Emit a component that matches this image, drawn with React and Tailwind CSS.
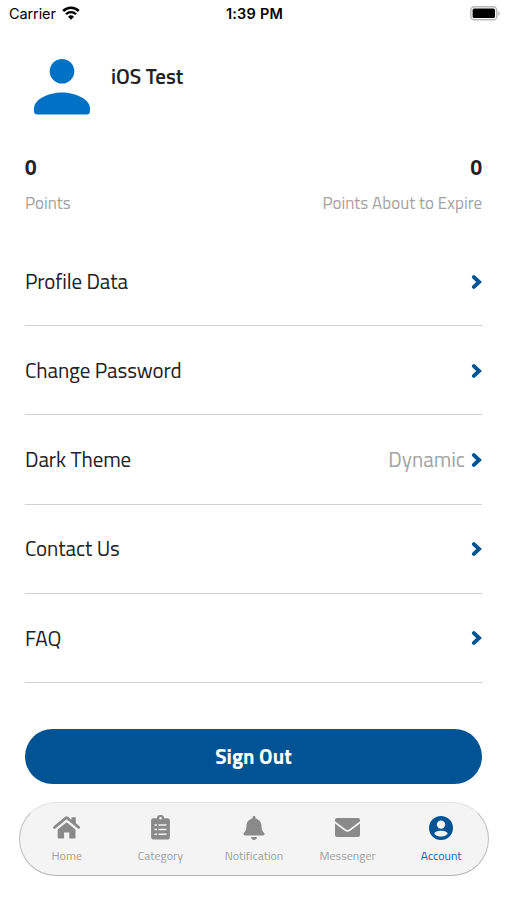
import React from 'react';
import { FaBell } from 'react-icons/fa';

const menuItems = [
  { label: 'Profile Data' },
  { label: 'Change Password' },
  { label: 'Dark Theme', value: 'Dynamic' },
  { label: 'Contact Us' },
  { label: 'FAQ' },
];

const Home = () => (
  <svg width="27" height="23" viewBox="0 0 27 23" fill="currentColor">
    <path d="M18.6 1.2h4.2v8l-4.2-3.6z" />
    <path d="M1.5 11.4L13 1.9q.6-.4 1.200 0l11.500 9.500" fill="none" stroke="currentColor" strokeWidth="2.7" strokeLinecap="round" />
    <path d="M13.6 6.200l8.900 7.400v8q0 1-1 1h-5.200v-6.100h-5.200v6.100H5.700q-1 0-1-1v-8z" />
  </svg>
);

const Clipboard = () => (
  <svg width="19" height="25" viewBox="0 0 19 25">
    <path
      fill="currentColor"
      d="M2.300 3.300h3.600a3.600 3.300 0 0 1 7.200 0h3.600a2.200 2.200 0 0 1 2.200 2.200v16.800a2.200 2.200 0 0 1-2.200 2.200H2.300A2.200 2.200 0 0 1 .1 22.300V5.500a2.200 2.200 0 0 1 2.200-2.200z"
    />
    <circle cx="9.5" cy="3.3" r="1.2" fill="#f4f4f4" />
    <path d="M3.500 9.900h2.400M7.500 9.900h8M3.500 14.600h2.400M7.500 14.600h8M3.500 19.300h2.400M7.500 19.300h8" stroke="#f4f4f4" strokeWidth="1.5" />
  </svg>
);

const Mail = () => (
  <svg width="25" height="19" viewBox="0 0 25 19" fill="currentColor">
    <path d="M2 0h21a2 2 0 0 1 2 2v1.200l-10.600 8.100q-1.900 1.300-3.800 0L0 3.200V2a2 2 0 0 1 2-2z" />
    <path d="M0 5.500l10 7.500q2.500 1.600 5 0l10-7.500V17a2 2 0 0 1-2 2H2a2 2 0 0 1-2-2z" />
  </svg>
);

const Account = () => (
  <svg width="24" height="24" viewBox="0 0 24 24">
    <circle cx="12" cy="12" r="12" fill="currentColor" />
    <circle cx="12" cy="8.6" r="4.2" fill="#f4f4f4" />
    <path d="M12 14.700c3.400 0 6.600 1.300 6.600 2.900 0 1.500-3.200 3-6.600 3s-6.600-1.500-6.600-3c0-1.600 3.200-2.900 6.600-2.900z" fill="#f4f4f4" />
  </svg>
);

const tabs = [
  { label: 'Home', icon: <Home /> },
  { label: 'Category', icon: <Clipboard /> },
  { label: 'Notification', icon: <FaBell size={24} /> },
  { label: 'Messenger', icon: <Mail /> },
  { label: 'Account', icon: <Account />, active: true },
];

const Chevron = () => (
  <svg width="11" height="14" viewBox="0 0 11 14" fill="none">
    <path d="M2.900 2.100L8.100 7l-5.200 4.900" stroke="#005493" strokeWidth="3.9" strokeLinecap="round" />
  </svg>
);

const StatusBar = () => (
  <div className="h-7 grid grid-cols-3 items-center pl-[9px] pr-[7px] font-['Inter',sans-serif] text-black">
    <div className="flex items-center gap-[6px]">
      <span className="text-[14.5px] leading-none tracking-[-0.1px]">Carrier</span>
      <svg className="-mt-[2px]" width="18" height="14" viewBox="0 0 18 14" fill="none" stroke="#000">
        <path d="M1.200 5a11 11 0 0 1 15.600 0" strokeWidth="2.5" />
        <path d="M4 8.200a7 7 0 0 1 10 0" strokeWidth="2.3" />
        <path d="M9 13.800L6 10.800a4.300 4.300 0 0 1 6 0z" fill="#000" stroke="none" />
      </svg>
    </div>
    <span className="text-center text-[14.5px] leading-none font-semibold tracking-[0.2px]">1:39 PM</span>
    <svg className="justify-self-end -mt-[2px]" width="30" height="15" viewBox="0 0 30 15">
      <rect x="0.8" y="0.8" width="26" height="13" rx="3.6" fill="#fff" stroke="#b8b8b8" strokeWidth="1.5" />
      <rect x="2.6" y="2.6" width="22.4" height="9.4" rx="1.6" fill="#000" />
      <path d="M28.300 5v5q1.500-.8 1.500-2.500T28.300 5z" fill="#b8b8b8" />
    </svg>
  </div>
);

const App = () => {
  return (
    <div className="w-full h-[900px] bg-white font-['Titillium_Web','Roboto',sans-serif] text-[#222] overflow-hidden">
      <StatusBar />

      <div className="px-[25px]">
        <div className="flex pt-[31px] pl-[9px] h-[125px]">
          <svg width="56" height="56" viewBox="0 0 56 56" fill="#0072c6">
            <circle cx="28" cy="12.3" r="12.3" />
            <path d="M28 33.500c13 0 28 6.500 28 16V52q0 3.500-3.500 3.500h-49Q0 55.500 0 52v-2.500c0-9.500 15-16 28-16z" />
          </svg>
          <h1 className="ml-[21px] mt-[4px] text-[21px] leading-[26px] h-[26px] font-semibold">iOS Test</h1>
        </div>

        <div className="flex justify-between text-[20.5px] leading-[30px] font-bold">
          <span>0</span>
          <span>0</span>
        </div>
        <div className="flex justify-between mt-[8px] text-[17px] leading-6 text-[#a3a3a3]">
          <span>Points</span>
          <span className="tracking-[0.03px]">Points About to Expire</span>
        </div>

        <div className="mt-[22px]">
          {menuItems.map((item) => (
            <div key={item.label} className="flex items-center justify-between h-[89.2px] pt-[1px] border-b-[1.5px] border-[#d0d0d0] text-[21px]">
              <span className="tracking-[-0.1px]">{item.label}</span>
              <div className="flex items-center gap-[6px]">
                {item.value && <span className="text-[#a3a3a3]">{item.value}</span>}
                <Chevron />
              </div>
            </div>
          ))}
        </div>

        <button className="block w-full h-[55px] mt-[46px] rounded-full bg-[#005493] text-white text-[20.8px] font-bold">
          Sign Out
        </button>
      </div>

      <nav className="ml-[19px] mr-[18px] mt-[18px] h-[74px] rounded-full bg-[#f4f4f4] border border-t-[#e2e2e2] border-x-[#bcbcbc] border-b-[#b4b4b4] flex">
        {tabs.map((tab) => (
          <div
            key={tab.label}
            className={`flex-1 flex flex-col items-center pt-[11px] ${tab.active ? 'text-[#005493]' : 'text-[#8a8a8a]'}`}
          >
            <div className="h-7 flex items-center">{tab.icon}</div>
            <span className={`mt-[6px] text-[12px] leading-4 ${tab.active ? 'text-[#0768ad]' : 'text-[#a0a0a0]'}`}>{tab.label}</span>
          </div>
        ))}
      </nav>
    </div>
  );
};

export default App;
